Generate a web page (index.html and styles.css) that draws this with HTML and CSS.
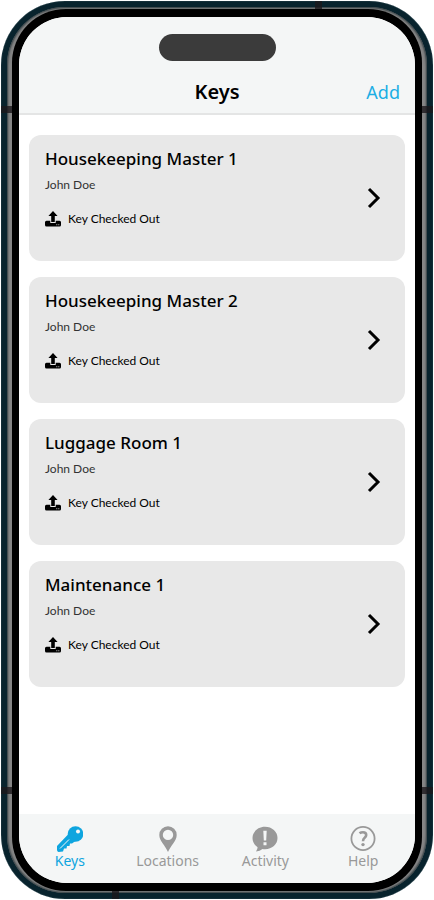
FILE: index.html
```html
<!DOCTYPE html>
<html lang="en">
<head>
<meta charset="utf-8">
<meta name="viewport" content="width=device-width, initial-scale=1">
<title>Keys</title>
<link rel="stylesheet" href="styles.css">
</head>
<body>
<svg class="sprite" aria-hidden="true">
  <symbol id="upload" viewBox="0 0 16 16">
    <path d="M8 0l4.600 4.900H9.800V11H6.200V4.900H3.400z"/>
    <path d="M1.500 9.800H5.300V11.900H10.700V9.800H14.500Q16 9.800 16 11.300V14Q16 15.500 14.500 15.500H1.500Q0 15.500 0 14V11.300Q0 9.800 1.500 9.800z"/>
    <path d="M11.300 13.300h1v1h-1zM13.300 13.300h1v1h-1z" fill="#c4c4c4"/>
  </symbol>
  <symbol id="chevron" viewBox="0 0 14 22">
    <path d="M2 2l9 9-9 9" fill="none" stroke="currentColor" stroke-width="3"/>
  </symbol>
</svg>
<div class="phone">
  <span class="band band-left band-upper"></span>
  <span class="band band-right band-upper"></span>
  <span class="band band-left band-lower"></span>
  <span class="band band-right band-lower"></span>
  <span class="band band-top"></span>
  <span class="band band-bottom"></span>
  <div class="rim">
    <div class="bezel">
      <div class="screen">
        <header class="header">
          <div class="island"></div>
          <div class="title-bar">
            <h1 class="title">Keys</h1>
            <button class="add" type="button">Add</button>
          </div>
        </header>
        <main class="content">
          <ul class="list">
            <li><a class="card" href="#">
              <div class="info">
                <h2 class="name">Housekeeping Master 1</h2>
                <p class="holder">John Doe</p>
                <p class="status"><svg class="upload"><use href="#upload"/></svg>Key Checked Out</p>
              </div>
              <svg class="chevron"><use href="#chevron"/></svg>
            </a></li>
            <li><a class="card" href="#">
              <div class="info">
                <h2 class="name">Housekeeping Master 2</h2>
                <p class="holder">John Doe</p>
                <p class="status"><svg class="upload"><use href="#upload"/></svg>Key Checked Out</p>
              </div>
              <svg class="chevron"><use href="#chevron"/></svg>
            </a></li>
            <li><a class="card" href="#">
              <div class="info">
                <h2 class="name">Luggage Room 1</h2>
                <p class="holder">John Doe</p>
                <p class="status"><svg class="upload"><use href="#upload"/></svg>Key Checked Out</p>
              </div>
              <svg class="chevron"><use href="#chevron"/></svg>
            </a></li>
            <li><a class="card" href="#">
              <div class="info">
                <h2 class="name">Maintenance 1</h2>
                <p class="holder">John Doe</p>
                <p class="status"><svg class="upload"><use href="#upload"/></svg>Key Checked Out</p>
              </div>
              <svg class="chevron"><use href="#chevron"/></svg>
            </a></li>
          </ul>
        </main>
        <nav class="tabs">
          <a class="tab active" href="#">
            <svg class="tab-icon" viewBox="0 0 26 26">
              <circle cx="18.500" cy="8" r="7.800"/>
              <path d="M11.500 8L18.500 15L15 17.500L13 17.500L12.500 20L10 20L9.500 22.500L7 22.500L6 25.500L1.500 26Q0 25.500 0 24V20Z"/>
              <circle cx="21" cy="5.500" r="2" fill="#f4f6f6"/>
              <path d="M3 22.500L12 13.500" stroke="#f4f6f6" stroke-width="1" fill="none"/>
            </svg>
            Keys
          </a>
          <a class="tab" href="#">
            <svg class="tab-icon" viewBox="0 0 26 26">
              <path fill-rule="evenodd" d="M13 0.300a8.700 8.700 0 0 1 8.700 8.700c0 6-6 10.500-8.700 17c-2.700-6.500-8.700-11-8.700-17A8.700 8.700 0 0 1 13 0.300zM13 3.700a5.200 5.200 0 1 0 0 10.400a5.200 5.200 0 0 0 0-10.400z"/>
            </svg>
            Locations
          </a>
          <a class="tab" href="#">
            <svg class="tab-icon" viewBox="0 0 26 26">
              <path d="M13 0.800C20 0.800 25.500 5.700 25.500 12S20 23.200 13 23.200Q11.600 23.200 10.500 23Q8 25 4 25.500Q5.500 23.500 5.600 21.200C2.400 19 0.500 15.800 0.500 12C0.500 5.700 6 0.800 13 0.800z"/>
              <path d="M11.300 4.800h3.400l-.5 9.700h-2.400zM11.500 16.200h3v3h-3z" fill="#f4f6f6"/>
            </svg>
            Activity
          </a>
          <a class="tab" href="#">
            <svg class="tab-icon" viewBox="0 0 26 26">
              <circle cx="13" cy="12.500" r="11.600" fill="none" stroke="currentColor" stroke-width="1.800"/>
              <path d="M9.500 7.300Q11 6.200 13 6.200Q16.200 6.200 16.200 9Q16.200 10.500 14.700 11.700Q13 13 13 15.300" fill="none" stroke="currentColor" stroke-width="2.600"/>
              <circle cx="13" cy="18.600" r="1.700"/>
            </svg>
            Help
          </a>
        </nav>
      </div>
    </div>
  </div>
</div>
</body>
</html>
```
FILE: styles.css
```css
* { box-sizing: border-box; }

body {
  margin: 0;
  padding: 1px;
  min-height: 100vh;
  display: flex;
  background: #fff;
  color: #000;
  font-family: "Noto Sans", sans-serif;
}

h1, h2, p, ul { margin: 0; padding: 0; }
ul { list-style: none; }
a { color: inherit; text-decoration: none; }
svg { display: block; fill: currentColor; }
.sprite { position: absolute; width: 0; height: 0; }

.phone {
  position: relative;
  flex: 1;
  display: flex;
  padding: 6px;
  border-radius: 64px;
  background: #08232d;
  box-shadow: inset 0 0 1px 0 #7d9298;
}

.rim {
  flex: 1;
  display: flex;
  padding: 2px 5px;
  border-radius: 58px;
  background: #858585;
  box-shadow: inset 0 0 2px 1px #303b3f;
}

.bezel {
  flex: 1;
  display: flex;
  padding: 8px 7px;
  border-radius: 54px;
  background: #000;
}

.screen {
  flex: 1;
  display: flex;
  flex-direction: column;
  overflow: hidden;
  border-radius: 48px;
  background: #fff;
}

.band { position: absolute; background: #1c181c; opacity: 0.8; }
.band-left { left: 0; width: 11px; height: 7px; }
.band-right { right: 0; width: 11px; height: 7px; }
.band-upper { top: 105px; }
.band-lower { bottom: 105px; }
.band-top { top: 0; right: 111px; width: 7px; height: 8px; }
.band-bottom { bottom: 0; left: 111px; width: 7px; height: 8px; }

.header {
  padding-top: 17px;
  background: #f4f6f6;
  border-bottom: 2px solid #e4e5e5;
}

.island {
  width: 117px;
  height: 27px;
  margin: 0 auto;
  border-radius: 14px;
  background: #3b3b3b;
}

.title-bar {
  display: grid;
  grid-template-columns: 1fr auto 1fr;
  align-items: center;
  padding: 17px 15px 7px;
}

.title {
  grid-column: 2;
  font-size: 20px;
  line-height: 28px;
  font-weight: 600;
}

.add {
  justify-self: end;
  padding: 0;
  border: 0;
  background: none;
  color: #1caee4;
  font: 18px/28px "Noto Sans", sans-serif;
}

.content { flex: 1; padding: 20px 10px; }
.list { display: grid; gap: 16px; }

.card {
  display: flex;
  align-items: center;
  justify-content: space-between;
  padding: 12px 24px 32px 16px;
  border-radius: 12px;
  background: #e8e8e8;
}

.name { font-size: 17px; line-height: 24px; font-weight: 500; }

.holder,
.status {
  font-family: Lato, sans-serif;
  font-size: 12px;
  line-height: 20px;
}

.holder { margin-top: 4px; color: #333; }

.status {
  display: flex;
  align-items: center;
  gap: 7px;
  margin-top: 14px;
}

.upload { width: 16px; height: 16px; }
.chevron { width: 14px; height: 22px; margin-top: 20px; }

.tabs {
  display: grid;
  grid-template-columns: repeat(4, 1fr);
  padding: 12px 3px 13px 2px;
  background: #f4f6f6;
  color: #999;
}

.tab {
  display: flex;
  flex-direction: column;
  align-items: center;
  font-size: 14px;
  line-height: 18px;
}

.tab-icon { width: 26px; height: 26px; }
.active { color: #0ea5df; }
```
